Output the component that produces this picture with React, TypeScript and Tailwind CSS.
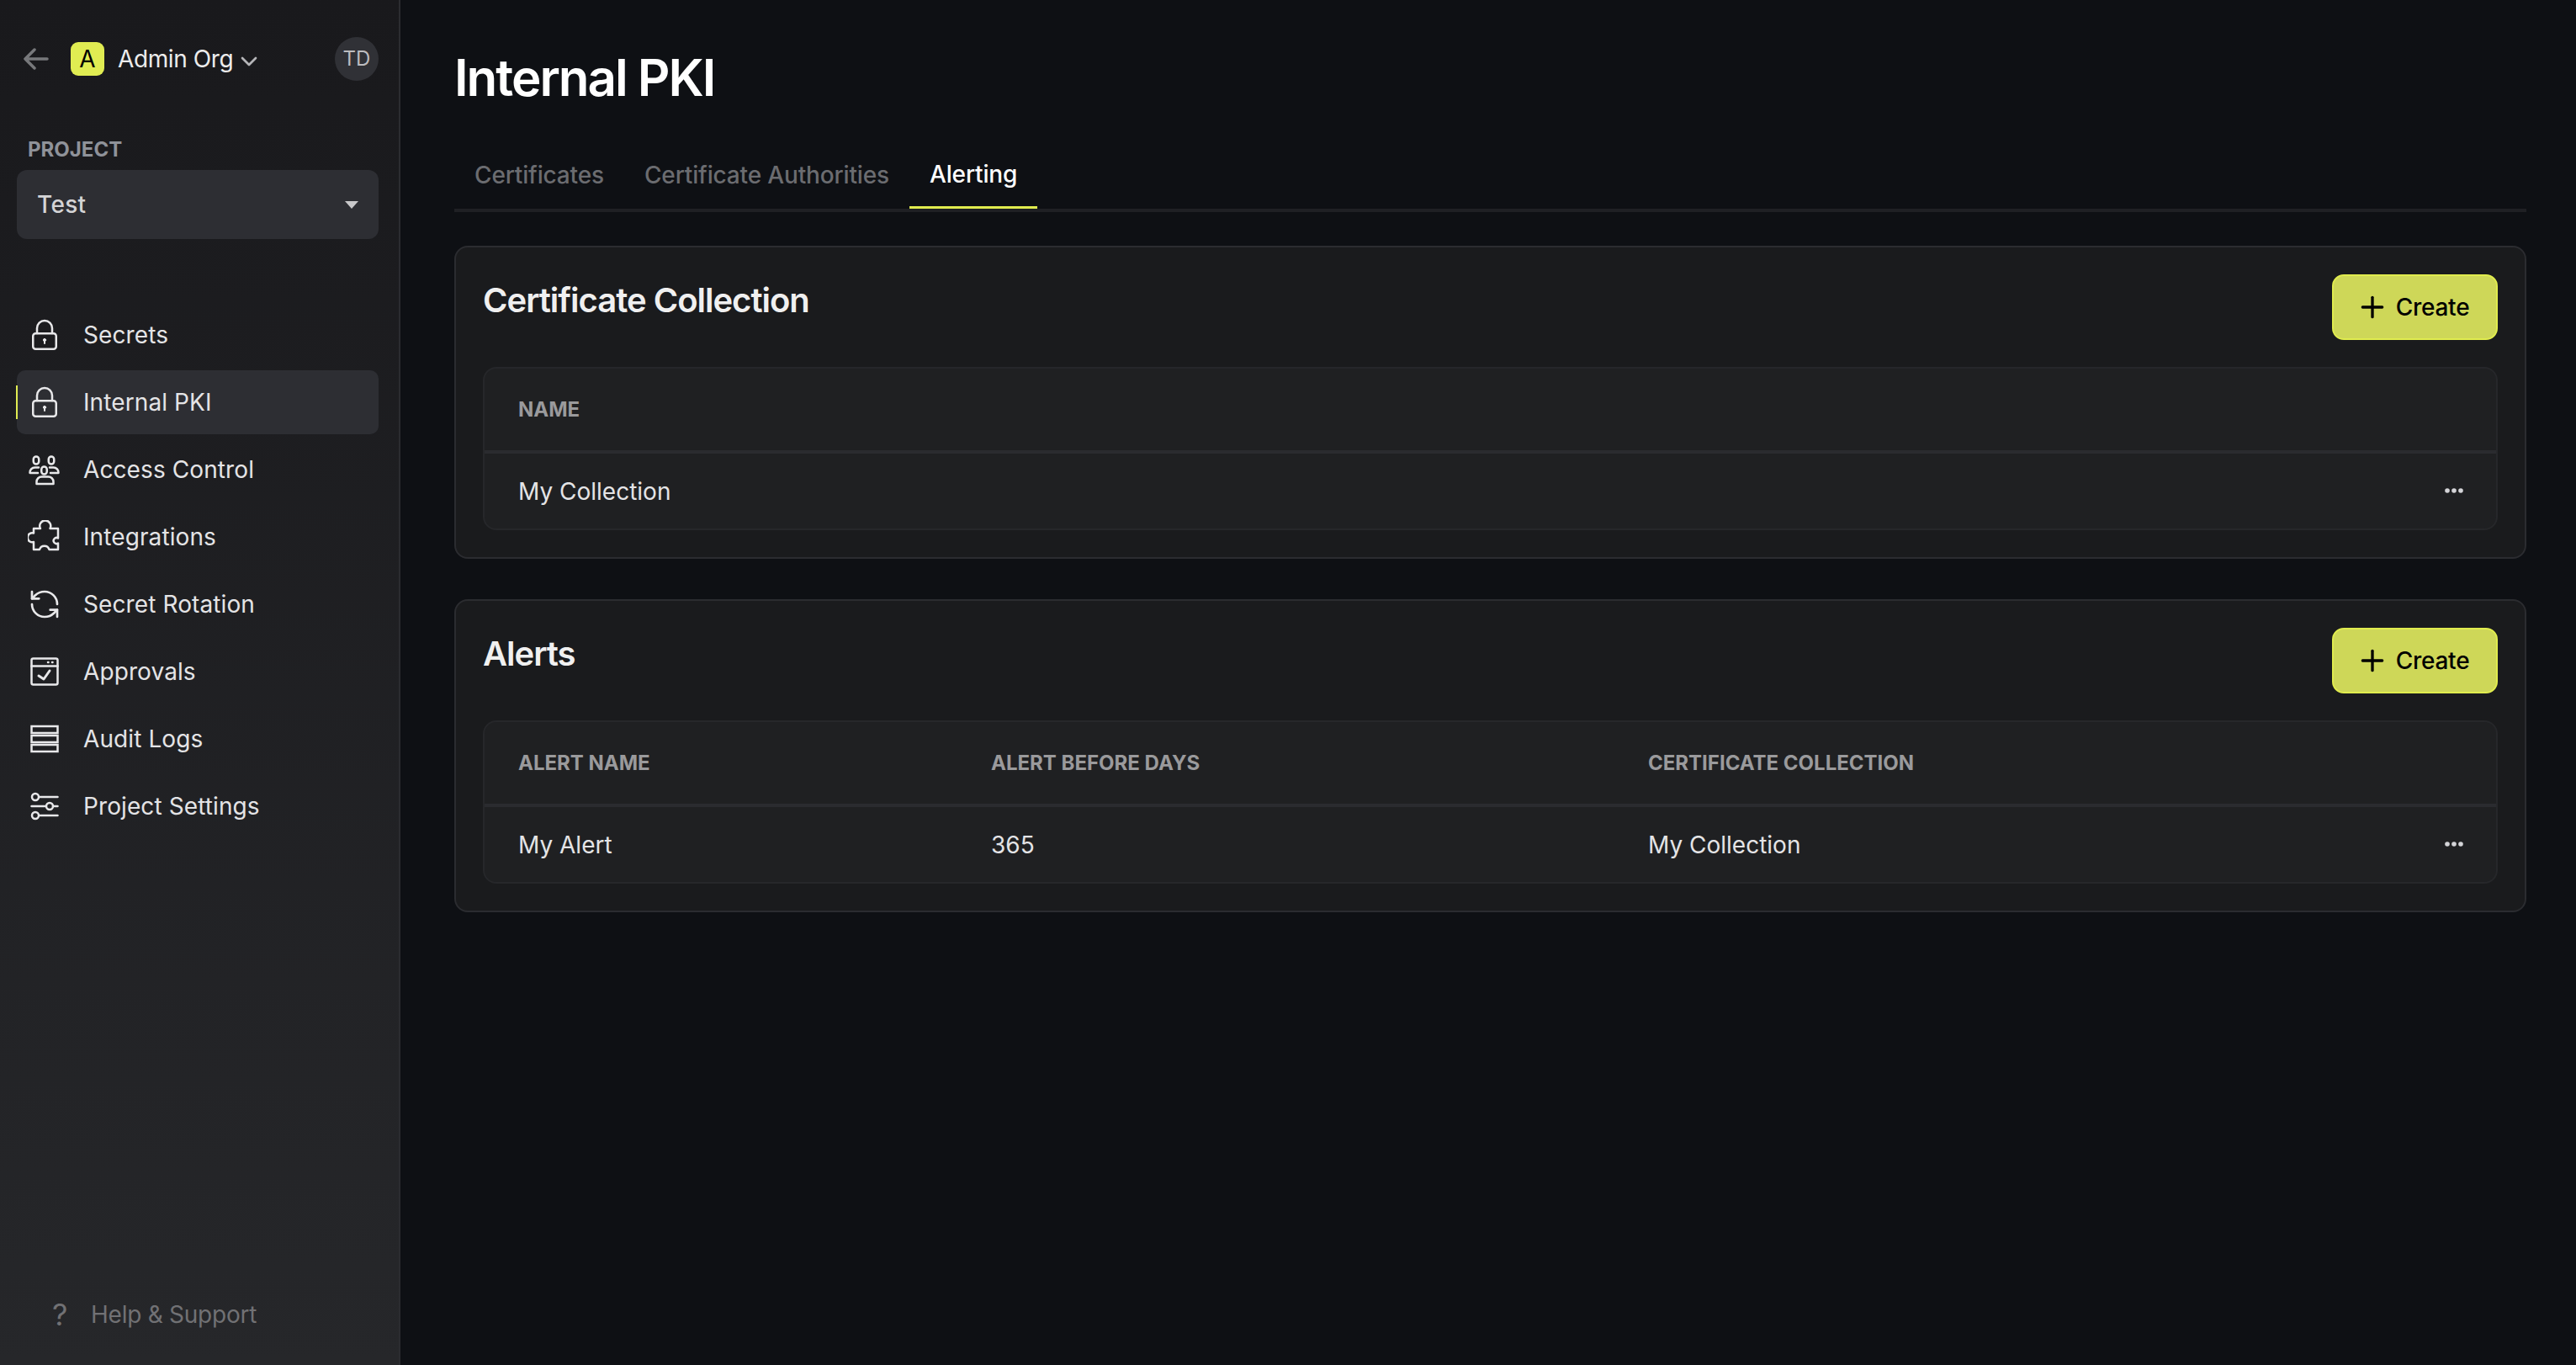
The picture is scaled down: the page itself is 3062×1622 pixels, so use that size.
import React from 'react';
import { ChevronDown, Plus, RefreshCcw } from 'lucide-react';

const svgProps = {
  width: 40,
  height: 40,
  viewBox: '0 0 40 40',
  fill: 'none',
  stroke: 'currentColor',
  strokeWidth: 2.5,
  strokeLinecap: 'round' as const,
  strokeLinejoin: 'round' as const,
};

const LockIcon = () => (
  <svg {...svgProps}>
    <rect x="6.25" y="18.25" width="27.5" height="18.5" rx="3" />
    <path d="M11 18v-6a9 9 0 0 1 18 0v6" />
    <circle cx="20" cy="26" r="1.6" fill="currentColor" strokeWidth="1" />
    <path d="M20 27v3" strokeWidth="2" />
  </svg>
);

const GroupIcon = () => (
  <svg {...svgProps}>
    <rect x="6.750" y="4.500" width="6.500" height="9" rx="3.250" />
    <rect x="24.750" y="4.500" width="6.500" height="9" rx="3.250" />
    <rect x="16.250" y="16.500" width="6.500" height="9" rx="3.250" />
    <path d="M13 17.500H8.500a6 6 0 0 0-6 6.500H12" />
    <path d="M26 17.500h4.500a6 6 0 0 1 6 6.500H27" />
    <path d="M10.500 37v-2.500a6 6 0 0 1 6-6h8a6 6 0 0 1 6 6V37z" />
  </svg>
);

const PuzzleIcon = () => (
  <svg {...svgProps}>
    <path d="M7 10h8a6.500 6.500 0 1 1 11.500 0H36v11.500a3.500 3.500 0 1 0 0 6V35H25.500a6 6 0 0 0-11.500 0H7v-9a5.500 5.500 0 1 1 0-10.500z" />
  </svg>
);

const ApprovalsIcon = () => (
  <svg {...svgProps}>
    <rect x="4.500" y="4.500" width="31" height="31" rx="2" />
    <path d="M4.500 13.500h31" />
    <path d="M24 9h.5M29 9h.5" />
    <path d="M13 25l6 4 7-10" strokeWidth="3" />
  </svg>
);

const LogsIcon = () => (
  <svg {...svgProps} strokeLinejoin="miter">
    <rect x="4.500" y="5" width="31" height="8" />
    <rect x="4.500" y="16" width="31" height="8" />
    <rect x="4.500" y="27" width="31" height="8" />
  </svg>
);

const SlidersIcon = () => (
  <svg {...svgProps}>
    <path d="M13.500 9h22M4.500 20h17M30 20h5.500M13.500 31h22" />
    <circle cx="9" cy="9" r="4" />
    <circle cx="26" cy="20" r="4" />
    <circle cx="9" cy="31" r="4" />
  </svg>
);

const navItems = [
  { name: 'Secrets', icon: <LockIcon /> },
  { name: 'Internal PKI', icon: <LockIcon />, active: true },
  { name: 'Access Control', icon: <GroupIcon /> },
  { name: 'Integrations', icon: <PuzzleIcon /> },
  { name: 'Secret Rotation', icon: <RefreshCcw size={40} strokeWidth={1.6} /> },
  { name: 'Approvals', icon: <ApprovalsIcon /> },
  { name: 'Audit Logs', icon: <LogsIcon /> },
  { name: 'Project Settings', icon: <SlidersIcon /> },
];

const Sidebar = () => (
  <aside className="flex h-full w-[476px] shrink-0 flex-col justify-between border-r-2 border-[#2b2c30] bg-gradient-to-b from-[#19191c] to-[#26272a] pl-[20px] pr-[24px]">
    <div>
      <div className="mt-[44px] flex h-[52px] items-center">
        <svg width="32" height="28" viewBox="0 0 32 28" fill="none" stroke="#77787b" strokeWidth="3.5" strokeLinecap="round" strokeLinejoin="round" className="ml-[8px]">
          <path d="M2 14h26M13 3L2 14l11 11" />
        </svg>
        <div className="ml-[24px] flex h-[40px] w-[40px] items-center justify-center rounded-[9px] bg-[#e0ec52] text-[28px] text-black">A</div>
        <span className="ml-[16px] text-[28px] leading-none tracking-[-0.4px] text-[#ececec]">Admin Org</span>
        <ChevronDown size={32} strokeWidth={2} className="ml-[3px] mt-[5px] text-[#b5b5b8]" />
        <div className="ml-auto flex h-[52px] w-[52px] items-center justify-center rounded-full bg-[#303136] text-[24px] text-[#bcbcbf]">TD</div>
      </div>
      <div className="mt-[66px] pl-[13px] text-[24px] font-bold leading-[32px] text-[#8f9299]">PROJECT</div>
      <div className="mt-[8px] flex h-[82px] items-center justify-between rounded-[12px] bg-[#2d2e33] pl-[24px] pr-[24px] text-[28px] font-medium tracking-[0.3px] text-[#d4d4d6]">
        <span>Test</span>
        <span className="h-0 w-0 border-x-[8px] border-t-[9px] border-x-transparent border-t-[#c8c8ca]" />
      </div>
      <nav className="mt-[76px] flex flex-col gap-[4px]">
        {navItems.map(item => (
          <div key={item.name} className={`relative flex h-[76px] items-center gap-[26px] rounded-[10px] pl-[13px] ${item.active ? 'bg-[#2d2e33]' : ''}`}>
            {item.active && <span className="absolute left-[-1px] top-[18px] h-[40px] w-[2px] bg-[#e0ec52]" />}
            <span className="text-[#e8e8ea]">{item.icon}</span>
            <span className="text-[28px] tracking-[0.1px] text-[#e4e4e6]">{item.name}</span>
          </div>
        ))}
      </nav>
    </div>
    <div className="mb-[38px] flex h-[44px] items-center pl-[42px] text-[28px] tracking-[-0.25px] text-[#717174]">
      <span className="w-[46px] text-[36px]">?</span>
      <span>Help &amp; Support</span>
    </div>
  </aside>
);

const CreateButton = () => (
  <button className="flex h-[78px] w-[197px] items-center justify-center gap-[8px] rounded-[14px] border-2 border-[#e0ec4e] bg-[#ced758] pr-[6px] text-[28px] font-medium tracking-[-0.25px] text-black">
    <Plus size={40} strokeWidth={2} />
    Create
  </button>
);

const Dots = () => (
  <svg width="22" height="6" viewBox="0 0 22 6" fill="#d4d4d8" className="mb-[2px] ml-auto">
    <circle cx="3" cy="3" r="2.800" />
    <circle cx="11" cy="3" r="2.800" />
    <circle cx="19" cy="3" r="2.800" />
  </svg>
);

const thClass = 'h-[99px] pl-[40px] text-left text-[24px] font-bold text-[#9a9a9c]';
const tdClass = 'h-[91px] pl-[40px] text-[28px] font-normal text-[#e4e4e6]';

type CardProps = { title: string; headers: string[]; cells: string[]; widths: string[] };

const Card = ({ title, headers, cells, widths }: CardProps) => (
  <section className="rounded-[16px] border-2 border-[#2b2c30] bg-[#1a1b1d] p-[32px]">
    <div className="mb-[32px] flex items-start justify-between">
      <h2 className="text-[40px] font-semibold leading-[62px] tracking-[-1px] text-[#f0f0f0]">{title}</h2>
      <CreateButton />
    </div>
    <div className="overflow-hidden rounded-[16px] border-2 border-[#26272a] bg-[#1f2022]">
      <table className="w-full table-fixed border-collapse">
        <thead>
          <tr className="border-b-4 border-[#2a2b2f]">
            {headers.map((h, i) => (
              <th key={h} className={`${thClass} ${widths[i]}`}>{h}</th>
            ))}
            <th className="w-[120px]" />
          </tr>
        </thead>
        <tbody>
          <tr>
            {cells.map(c => (
              <td key={c} className={tdClass}>{c}</td>
            ))}
            <td className="pr-[39px]">
              <div className="flex items-center">
                <Dots />
              </div>
            </td>
          </tr>
        </tbody>
      </table>
    </div>
  </section>
);

export default function App() {
  return (
    <div className="flex h-screen w-screen overflow-hidden bg-[#0e1014] font-['Inter',sans-serif]">
      <Sidebar />
      <main className="flex-1 pl-[64px] pr-[59px] pt-[56px]">
        <h1 className="text-[60px] font-semibold leading-[72px] tracking-[-2px] text-white">Internal PKI</h1>
        <div className="mt-[40px] flex h-[84px] border-b-4 border-[#1f2024] text-[28px] font-medium tracking-[-0.15px]">
          <div className="flex h-[80px] items-center px-[24px] text-[#6b6c70]">Certificates</div>
          <div className="flex h-[80px] items-center px-[24px] text-[#6b6c70]">Certificate Authorities</div>
          <div className="flex h-[80px] items-center border-b-[3px] border-[#e0ec4e] px-[24px] text-white">Alerting</div>
        </div>
        <div className="mt-[40px] flex flex-col gap-[48px]">
          <Card title="Certificate Collection" headers={['NAME']} cells={['My Collection']} widths={['']} />
          <Card
            title="Alerts"
            headers={['ALERT NAME', 'ALERT BEFORE DAYS', 'CERTIFICATE COLLECTION']}
            cells={['My Alert', '365', 'My Collection']}
            widths={['w-[562px]', 'w-[781px]', '']}
          />
        </div>
      </main>
    </div>
  );
}
